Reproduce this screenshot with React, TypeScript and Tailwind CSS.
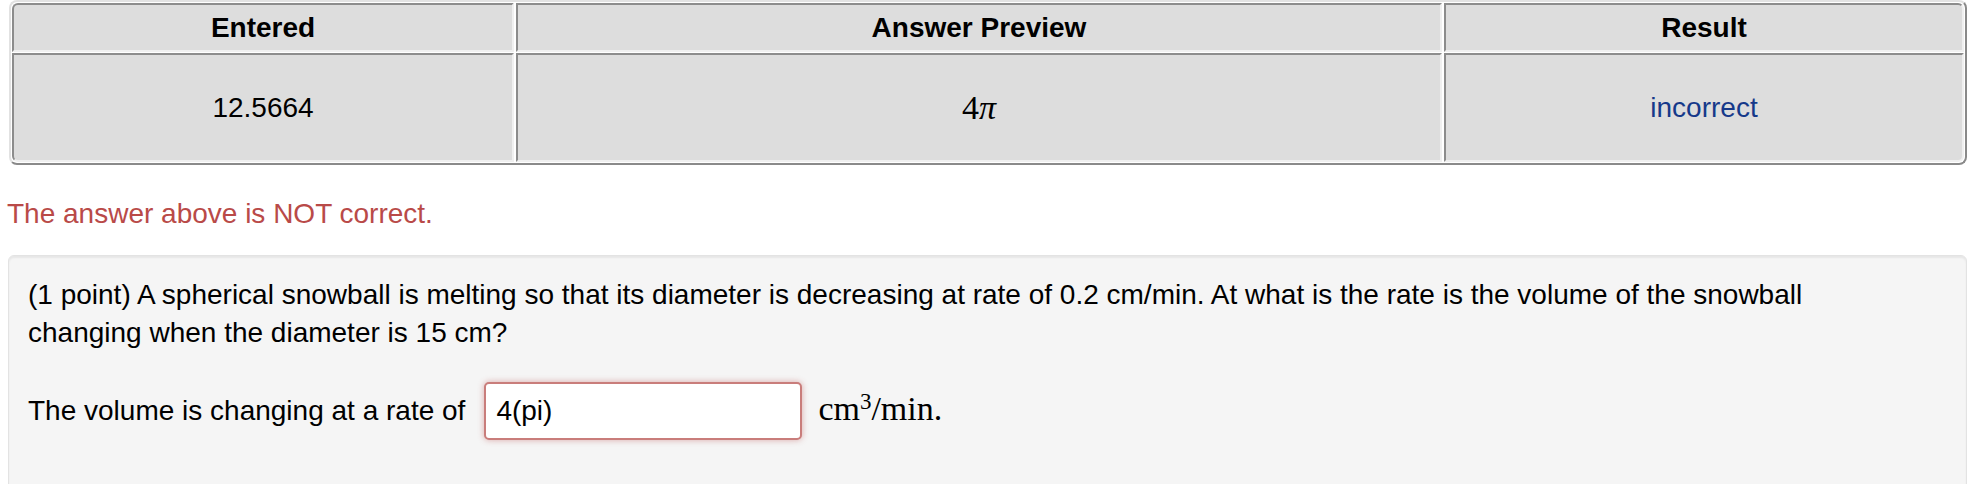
import React from "react";

const cell =
  "flex items-center justify-center border-2 border-t-[#8c8c8c] border-l-[#8c8c8c] border-b-[#f0f0f0] border-r-[#f0f0f0] bg-[#dddddd]";

function ResultsTable() {
  return (
    <div className="ml-[9px] w-[1958px] rounded-[8px] border-2 border-t-[#e2e2e2] border-l-[#e2e2e2] border-b-[#8a8a8a] border-r-[#8a8a8a] p-[1px]">
      <div className="grid grid-cols-[502px_926px_520px] grid-rows-[49px_109px] gap-x-[2px] gap-y-[1px]">
        <div className={`${cell} rounded-tl-[6px] font-bold`}>Entered</div>
        <div className={`${cell} font-bold`}>Answer Preview</div>
        <div className={`${cell} rounded-tr-[6px] font-bold`}>Result</div>
        <div className={`${cell} rounded-bl-[6px]`}>12.5664</div>
        <div className={cell}>
          <span className="font-['Liberation_Serif',serif] text-[34px]">
            4<i>π</i>
          </span>
        </div>
        <div className={`${cell} rounded-br-[6px] bg-[#cd9290] text-[#16398a]`}>incorrect</div>
      </div>
    </div>
  );
}

export default function App() {
  return (
    <div className="min-h-[484px] bg-white font-['Liberation_Sans',Arial,sans-serif] text-[28px] leading-[38px] text-black">
      <ResultsTable />
      <p className="mt-[30px] pl-[7px] text-[#b94a48]">The answer above is NOT correct.</p>
      <div className="mt-[22px] ml-[8px] w-[1959px] rounded-[6px] border border-[#e3e3e3] bg-[#f5f5f5] px-[19px] pt-[20px] pb-[80px] shadow-[inset_0_2px_2px_rgba(0,0,0,0.06)]">
        <p>
          (1 point) A spherical snowball is melting so that its diameter is decreasing at rate of 0.2 cm/min. At
          what is the rate is the volume of the snowball
          <br />
          changing when the diameter is 15 cm?
        </p>
        <div className="mt-[30px] flex items-baseline">
          <span>The volume is changing at a rate of</span>
          <input
            readOnly
            value="4(pi)"
            className="ml-[19px] h-[58px] w-[318px] rounded-[5px] border-2 border-[#c97d7b] bg-white px-[10px] text-[28px] text-black shadow-[0_0_6px_rgba(185,74,72,0.45)] outline-none"
          />
          <span className="ml-[16px] font-['Liberation_Serif',serif] text-[34px]">
            cm<sup className="text-[23px]">3</sup>/min.
          </span>
        </div>
      </div>
    </div>
  );
}
